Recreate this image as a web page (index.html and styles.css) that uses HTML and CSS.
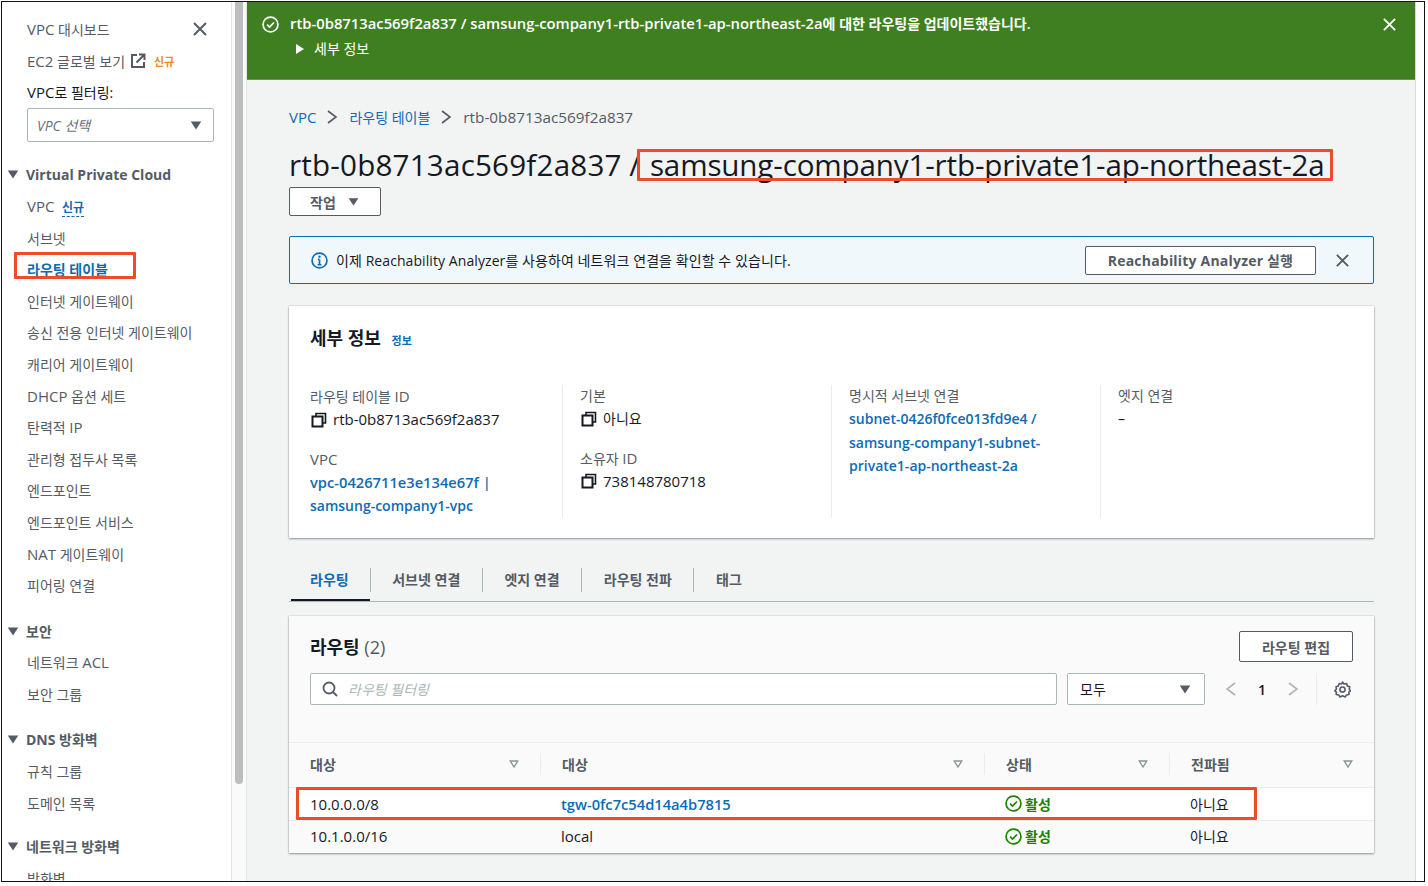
FILE: index.html
```html
<!DOCTYPE html>
<html lang="ko">
<head>
    <meta charset="UTF-8">
    <title>rtb-0b8713ac569f2a837 | VPC</title>
    <link rel="stylesheet" href="styles.css">
</head>
<body>
    <svg class="icon-defs" width="0" height="0">
        <defs>
            <symbol id="i-x" viewBox="0 0 16 16"><path d="M2 2l12 12M14 2L2 14" fill="none" stroke="currentColor" stroke-width="2"/></symbol>
            <symbol id="i-caret" viewBox="0 0 16 16"><path d="M2 4h12l-6 9z" fill="currentColor"/></symbol>
            <symbol id="i-check" viewBox="0 0 16 16"><circle cx="8" cy="8" r="7" fill="none" stroke="currentColor" stroke-width="1.6"/><path d="M4.8 8.2l2.3 2.3 4.2-4.4" fill="none" stroke="currentColor" stroke-width="1.6"/></symbol>
            <symbol id="i-copy" viewBox="0 0 16 16"><path d="M5 4V1.500h9.500V11H12" fill="none" stroke="currentColor" stroke-width="1.6"/><rect x="1.500" y="4.500" width="10" height="10" fill="none" stroke="currentColor" stroke-width="2"/></symbol>
            <symbol id="i-sort" viewBox="0 0 16 16"><path d="M3 4h10l-5 8z" fill="none" stroke="currentColor" stroke-width="1.8"/></symbol>
        </defs>
    </svg>

    <div class="frame">
        <nav class="sidebar">
            <div class="side-top">
                <a class="side-link"><span class="en">VPC</span> 대시보드</a>
                <svg class="side-close"><use href="#i-x"/></svg>
            </div>
            <div class="side-top">
                <a class="side-link"><span class="en">EC2</span> 글로벌 보기</a>
                <svg class="ext-icon" viewBox="0 0 16 16"><path d="M7 2H2v12h12V9" fill="none" stroke="currentColor" stroke-width="2"/><path d="M6.500 9.500L14 2M9 1.500h5.500V7" fill="none" stroke="currentColor" stroke-width="2"/></svg>
                <span class="badge-new">신규</span>
            </div>
            <div class="filter-label"><span class="en">VPC</span>로 필터링:</div>
            <div class="side-select">
                <span>VPC 선택</span>
                <svg class="caret"><use href="#i-caret"/></svg>
            </div>

            <div class="side-section first">
                <svg class="caret"><use href="#i-caret"/></svg>Virtual Private Cloud
            </div>
            <ul class="side-list vpc-list">
                <li><span class="en">VPC</span> <span class="badge-blue">신규</span></li>
                <li>서브넷</li>
                <li class="active">라우팅 테이블</li>
                <li>인터넷 게이트웨이</li>
                <li>송신 전용 인터넷 게이트웨이</li>
                <li>캐리어 게이트웨이</li>
                <li><span class="en">DHCP</span> 옵션 세트</li>
                <li>탄력적 <span class="en">IP</span></li>
                <li>관리형 접두사 목록</li>
                <li>엔드포인트</li>
                <li>엔드포인트 서비스</li>
                <li><span class="en">NAT</span> 게이트웨이</li>
                <li>피어링 연결</li>
            </ul>

            <div class="side-section">
                <svg class="caret"><use href="#i-caret"/></svg>보안
            </div>
            <ul class="side-list">
                <li>네트워크 <span class="en">ACL</span></li>
                <li>보안 그룹</li>
            </ul>

            <div class="side-section">
                <svg class="caret"><use href="#i-caret"/></svg>DNS 방화벽
            </div>
            <ul class="side-list">
                <li>규칙 그룹</li>
                <li>도메인 목록</li>
            </ul>

            <div class="side-section last">
                <svg class="caret"><use href="#i-caret"/></svg>네트워크 방화벽
            </div>
            <ul class="side-list">
                <li>방화벽</li>
            </ul>
        </nav>
        <div class="side-scroll"><div class="side-thumb"></div></div>

        <main class="main">
            <div class="flash">
                <svg class="flash-check"><use href="#i-check"/></svg>
                <div class="flash-body">
                    <div class="flash-title"><span class="flash-en">rtb-0b8713ac569f2a837 / samsung-company1-rtb-private1-ap-northeast-2a</span>에 대한 라우팅을 업데이트했습니다.</div>
                    <div class="flash-more"><span class="tri-right"></span>세부 정보</div>
                </div>
                <svg class="flash-close"><use href="#i-x"/></svg>
            </div>

            <div class="content">
                <div class="breadcrumb">
                    <a><span class="en">VPC</span></a>
                    <svg class="crumb-sep" viewBox="0 0 12 16"><path d="M2 2l8 6-8 6" fill="none" stroke="currentColor" stroke-width="1.600"/></svg>
                    <a>라우팅 테이블</a>
                    <svg class="crumb-sep" viewBox="0 0 12 16"><path d="M2 2l8 6-8 6" fill="none" stroke="currentColor" stroke-width="1.600"/></svg>
                    <span class="crumb-id">rtb-0b8713ac569f2a837</span>
                </div>

                <h1 class="page-title"><span class="title-id">rtb-0b8713ac569f2a837</span> / <span class="title-name">samsung-company1-rtb-private1-ap-northeast-2a</span></h1>
                <button class="btn btn-actions">작업 <svg class="caret"><use href="#i-caret"/></svg></button>

                <div class="info-alert">
                    <svg class="info-icon" viewBox="0 0 16 16"><circle cx="8" cy="8" r="7" fill="none" stroke="currentColor" stroke-width="1.600"/><path d="M8 7v5M6.200 12h3.600M6.500 7H8" fill="none" stroke="currentColor" stroke-width="1.600"/><circle cx="8" cy="4.400" r="1.100" fill="currentColor"/></svg>
                    <span class="info-text">이제 Reachability Analyzer를 사용하여 네트워크 연결을 확인할 수 있습니다.</span>
                    <button class="btn btn-run">Reachability Analyzer 실행</button>
                    <svg class="info-close"><use href="#i-x"/></svg>
                </div>

                <section class="card details">
                    <h2 class="card-title">세부 정보 <a class="info-link">정보</a></h2>
                    <div class="detail-grid">
                        <div class="detail-col">
                            <div class="field">
                                <div class="field-label">라우팅 테이블 <span class="en">ID</span></div>
                                <div class="field-value"><svg class="copy"><use href="#i-copy"/></svg><span class="en">rtb-0b8713ac569f2a837</span></div>
                            </div>
                            <div class="field">
                                <div class="field-label"><span class="en">VPC</span></div>
                                <div class="field-value link-value"><a><span class="link-id">vpc-0426711e3e134e67f |</span><br>samsung-company1-vpc</a></div>
                            </div>
                        </div>
                        <div class="detail-col">
                            <div class="field">
                                <div class="field-label">기본</div>
                                <div class="field-value"><svg class="copy"><use href="#i-copy"/></svg>아니요</div>
                            </div>
                            <div class="field">
                                <div class="field-label">소유자 <span class="en">ID</span></div>
                                <div class="field-value"><svg class="copy"><use href="#i-copy"/></svg><span class="en">738148780718</span></div>
                            </div>
                        </div>
                        <div class="detail-col">
                            <div class="field">
                                <div class="field-label">명시적 서브넷 연결</div>
                                <div class="field-value link-value"><a>subnet-0426f0fce013fd9e4 /<br>samsung-company1-subnet-<br>private1-ap-northeast-2a</a></div>
                            </div>
                        </div>
                        <div class="detail-col">
                            <div class="field">
                                <div class="field-label">엣지 연결</div>
                                <div class="field-value">–</div>
                            </div>
                        </div>
                    </div>
                </section>

                <div class="tabs">
                    <a class="tab active">라우팅</a>
                    <a class="tab">서브넷 연결</a>
                    <a class="tab">엣지 연결</a>
                    <a class="tab">라우팅 전파</a>
                    <a class="tab">태그</a>
                </div>

                <section class="card routes">
                    <div class="routes-head">
                        <h2 class="card-title">라우팅 <span class="count">(2)</span></h2>
                        <button class="btn btn-edit">라우팅 편집</button>
                    </div>
                    <div class="routes-tools">
                        <div class="search">
                            <svg class="search-icon" viewBox="0 0 16 16"><circle cx="7" cy="7" r="5.500" fill="none" stroke="currentColor" stroke-width="1.800"/><path d="M11 11l4 4" stroke="currentColor" stroke-width="1.800"/></svg>
                            <span>라우팅 필터링</span>
                        </div>
                        <div class="scope">모두 <svg class="caret"><use href="#i-caret"/></svg></div>
                        <div class="pager">
                            <svg class="pager-arrow" viewBox="0 0 12 16"><path d="M10 2L2 8l8 6" fill="none" stroke="currentColor" stroke-width="1.600"/></svg>
                            <span class="pager-num">1</span>
                            <svg class="pager-arrow" viewBox="0 0 12 16"><path d="M2 2l8 6-8 6" fill="none" stroke="currentColor" stroke-width="1.600"/></svg>
                        </div>
                        <div class="settings">
                            <svg class="gear" viewBox="0 0 16 16"><path d="M8 1l1.500 1.800 2.300-.4.800 2.200 2.200.8-.4 2.300L15.500 9.200l-1.500 1.200.1 2.300-2.300.4-1.300 1.900L8 13.900 5.700 15l-1.300-1.900-2.300-.4.100-2.300L.8 9.200 2.300 7.700l-.4-2.300 2.200-.8.800-2.200 2.300.4z" fill="none" stroke="currentColor" stroke-width="1.500" stroke-linejoin="round"/><circle cx="8" cy="8" r="2.400" fill="none" stroke="currentColor" stroke-width="1.500"/></svg>
                        </div>
                    </div>
                    <div class="table">
                        <div class="t-row t-head">
                            <div class="t-cell">대상<svg class="sort"><use href="#i-sort"/></svg></div>
                            <div class="t-cell">대상<svg class="sort"><use href="#i-sort"/></svg></div>
                            <div class="t-cell">상태<svg class="sort"><use href="#i-sort"/></svg></div>
                            <div class="t-cell">전파됨<svg class="sort"><use href="#i-sort"/></svg></div>
                        </div>
                        <div class="t-row t-white">
                            <div class="t-cell"><span class="en">10.0.0.0/8</span></div>
                            <div class="t-cell"><a class="link-id">tgw-0fc7c54d14a4b7815</a></div>
                            <div class="t-cell status"><svg class="status-icon"><use href="#i-check"/></svg>활성</div>
                            <div class="t-cell">아니요</div>
                        </div>
                        <div class="t-row">
                            <div class="t-cell"><span class="en">10.1.0.0/16</span></div>
                            <div class="t-cell"><span class="en">local</span></div>
                            <div class="t-cell status"><svg class="status-icon"><use href="#i-check"/></svg>활성</div>
                            <div class="t-cell">아니요</div>
                        </div>
                    </div>
                </section>
            </div>
        </main>
        <div class="page-scroll"></div>

        <!-- red annotation boxes from the screenshot author -->
        <div class="mark mark-nav"></div>
        <div class="mark mark-title"></div>
        <div class="mark mark-row"></div>
    </div>
</body>
</html>
```

FILE: styles.css
```css
* {
    margin: 0;
    padding: 0;
    box-sizing: border-box;
}

body {
    font-family: "Open Sans", "Noto Sans CJK KR", sans-serif;
    font-size: 14px;
    color: #16191f;
    background: white;
}

a {
    color: #0f6ab4;
}

ul {
    list-style: none;
}

/* latin runs are a bit wider than the korean text around them */
.en {
    font-size: 15px;
}

.link-id {
    font-size: 14.7px;
}

.icon-defs {
    position: absolute;
}

.frame {
    position: relative;
    display: flex;
    width: 1424px;
    height: 881px;
    margin: 1px 0 0 1px;
    border: 1px solid #111;
    overflow: hidden;
}

.caret {
    width: 14px;
    height: 14px;
    color: #545b64;
}

/* sidebar */
.sidebar {
    flex: none;
    width: 230px;
    height: 880px;
    overflow: hidden;
    padding: 11px 0 0 25px;
    background: white;
    border-right: 1px solid #e3e5e5;
    color: #545b64;
}

.side-top {
    display: flex;
    align-items: center;
    height: 32px;
}

.side-link {
    color: inherit;
}

.side-close {
    width: 16px;
    height: 16px;
    margin-left: auto;
    margin-right: 23px;
}

.ext-icon {
    width: 16px;
    height: 16px;
    margin-left: 5px;
}

.badge-new {
    margin-left: 8px;
    font-size: 11px;
    font-weight: 700;
    color: #f08a1d;
}

.filter-label {
    margin-top: 5px;
    line-height: 20px;
    color: #16191f;
}

.side-select {
    display: flex;
    align-items: center;
    justify-content: space-between;
    width: 187px;
    height: 34px;
    margin-top: 5px;
    padding: 0 10px 0 9px;
    background: white;
    border: 1px solid #aab7b8;
    border-radius: 2px;
    font-style: italic;
    color: #687078;
}

.side-section {
    display: flex;
    align-items: center;
    gap: 6px;
    height: 20px;
    margin: 19px 0 0 -21px;
    font-weight: 700;
    color: #545b64;
}

.side-section.first {
    margin-top: 22px;
}

.side-section.last {
    margin-top: 17px;
}

.side-list {
    padding-top: 6.5px;
}

.vpc-list {
    padding-top: 7px;
    margin-bottom: 2px;
}

.side-list li {
    height: 31.6px;
    line-height: 31.6px;
}

.side-list .active {
    font-weight: 700;
    color: #0f6ab4;
}

.badge-blue {
    margin-left: 4px;
    font-size: 12px;
    font-weight: 600;
    color: #0f6ab4;
    border-bottom: 1px dashed #0f6ab4;
}

.side-scroll {
    flex: none;
    width: 15px;
    padding: 0 3px;
    background: #fafafa;
    border-right: 1px solid #e3e5e5;
}

.side-thumb {
    width: 8px;
    height: 782px;
    background: #bdbdbd;
    border-radius: 0 0 4px 4px;
}

/* main column */
.main {
    flex: none;
    width: 1168px;
    background: #f2f3f3;
}

.page-scroll {
    flex: 1;
    background: white;
    border-left: 1px solid #d5dbdb;
}

.flash {
    display: flex;
    height: 78px;
    padding: 11px 18px 0 15px;
    background: #3f7f22;
    border-bottom: 1px solid #6d8f5c;
    color: white;
}

.flash-check {
    flex: none;
    width: 17px;
    height: 17px;
    margin-top: 3px;
}

.flash-body {
    flex: 1;
    margin-left: 11px;
}

.flash-title {
    line-height: 20px;
    font-weight: 600;
}

.flash-en {
    font-size: 14.8px;
}

.flash-more {
    display: flex;
    align-items: center;
    margin-top: 5px;
    line-height: 20px;
}

.tri-right {
    width: 0;
    height: 0;
    margin: 0 10px 0 6px;
    border-left: 8px solid white;
    border-top: 5px solid transparent;
    border-bottom: 5px solid transparent;
}

.flash-close {
    flex: none;
    width: 15px;
    height: 15px;
    margin-top: 4px;
}

.content {
    padding: 0 41px 0 42px;
}

.breadcrumb {
    display: flex;
    align-items: center;
    height: 20px;
    margin-top: 27px;
    color: #545b64;
}

.crumb-sep {
    width: 12px;
    height: 16px;
    margin: 0 11px 0 10px;
}

.crumb-id {
    font-size: 15.3px;
}

.page-title {
    margin-top: 19px;
    font-size: 29.6px;
    font-weight: 400;
    line-height: 38px;
    white-space: nowrap;
}

.title-id {
    letter-spacing: 0.2px;
}

.title-name {
    margin-left: 2px;
    letter-spacing: -0.15px;
}

.btn {
    background: white;
    border: 1px solid #545b64;
    border-radius: 2px;
    font: inherit;
    font-weight: 600;
    color: #545b64;
}

.btn-actions {
    display: flex;
    align-items: center;
    justify-content: center;
    gap: 11px;
    width: 92px;
    height: 29px;
    margin-top: 3px;
}

.btn-actions .caret {
    width: 13px;
    height: 13px;
}

.info-alert {
    display: flex;
    align-items: center;
    height: 48px;
    margin-top: 20px;
    padding: 0 23px 0 21px;
    background: #f1f8fb;
    border: 1px solid #0f6ab4;
    border-radius: 2px;
}

.info-icon {
    width: 17px;
    height: 17px;
    color: #0f6ab4;
}

.info-text {
    margin-left: 8px;
    letter-spacing: 0.08px;
}

.btn-run {
    width: 231px;
    height: 29px;
    margin-left: auto;
    font-weight: 700;
    letter-spacing: 0.2px;
}

.info-close {
    width: 15px;
    height: 15px;
    margin-left: 19px;
    color: #545b64;
}

/* cards */
.card {
    background: white;
    box-shadow: 0 1px 2px 0 rgba(0, 28, 36, 0.4), 0 0 1px 0 rgba(0, 28, 36, 0.3);
}

.details {
    height: 232px;
    margin-top: 22px;
    padding: 20px 0 0 21px;
}

.card-title {
    font-size: 18px;
    font-weight: 700;
    line-height: 24px;
}

.info-link {
    margin-left: 6px;
    font-size: 11px;
    font-weight: 600;
}

.detail-grid {
    display: grid;
    grid-template-columns: 253px repeat(3, 269px);
    margin-top: 32px;
}

.detail-col {
    height: 133px;
    padding-left: 17px;
    border-right: 1px solid #eaeded;
}

.detail-col:first-child {
    padding-left: 0;
}

.detail-col:last-child {
    border-right: none;
}

.field {
    margin-bottom: 16px;
}

.field-label {
    line-height: 22px;
    color: #545b64;
}

.field-value {
    display: flex;
    align-items: center;
    line-height: 23.5px;
}

.link-value {
    display: block;
    font-weight: 600;
}

.copy {
    flex: none;
    width: 16px;
    height: 16px;
    margin: 0 6px 0 1px;
}

/* tabs */
.tabs {
    display: flex;
    align-items: center;
    height: 37px;
    margin-top: 27px;
    padding-bottom: 6px;
    border-bottom: 1px solid #aab7b8;
}

.tab {
    position: relative;
    height: 24px;
    padding: 0 21.6px;
    line-height: 24px;
    font-weight: 600;
    color: #545b64;
    border-left: 1px solid #aab7b8;
}

.tab:first-child {
    padding: 0 21px;
    border-left: none;
}

.tab.active {
    color: #0f6ab4;
}

.tab.active::after {
    content: "";
    position: absolute;
    left: 2px;
    right: 0;
    bottom: -9px;
    height: 2px;
    background: #16191f;
}

.routes {
    height: 237px;
    margin-top: 14px;
    padding-top: 15px;
    background: #fafafa;
}

.routes-head {
    display: flex;
    align-items: center;
    justify-content: space-between;
    height: 31px;
    margin: 0 21px;
}

.count {
    font-weight: 400;
    color: #545b64;
}

.btn-edit {
    width: 114px;
    height: 31px;
}

.routes-tools {
    display: flex;
    align-items: center;
    height: 32px;
    margin: 11px 21px 0 21px;
}

.search {
    display: flex;
    align-items: center;
    flex: none;
    width: 747px;
    height: 32px;
    padding-left: 11px;
    background: white;
    border: 1px solid #aab7b8;
    border-radius: 2px;
    font-style: italic;
    color: #aab7b8;
}

.search-icon {
    width: 16px;
    height: 16px;
    margin-right: 10px;
    color: #545b64;
}

.scope {
    display: flex;
    align-items: center;
    justify-content: space-between;
    flex: none;
    width: 138px;
    height: 32px;
    margin-left: 10px;
    padding: 0 12px;
    background: white;
    border: 1px solid #aab7b8;
    border-radius: 2px;
}

.pager {
    display: flex;
    align-items: center;
    margin-left: 20px;
}

.pager-arrow {
    width: 12px;
    height: 16px;
    color: #aab7b8;
}

.pager-num {
    margin: 0 21px;
    font-weight: 600;
}

.settings {
    display: flex;
    align-items: center;
    height: 32px;
    margin-left: 17px;
    padding-left: 17px;
    border-left: 1px solid #eaeded;
}

.gear {
    width: 17px;
    height: 17px;
    color: #545b64;
}

.table {
    margin-top: 37px;
    border-top: 1px solid #eaeded;
}

.t-row {
    display: grid;
    grid-template-columns: 251px 444px 185px 1fr;
    align-items: center;
    height: 32.5px;
    border-top: 1px solid #eaeded;
}

.t-white {
    background: white;
}

.t-head {
    height: 44px;
    border-top: none;
    font-weight: 700;
    color: #545b64;
}

.t-cell {
    padding-left: 21px;
    white-space: nowrap;
}

.t-head .t-cell {
    position: relative;
    display: flex;
    align-items: center;
    justify-content: space-between;
    height: 22px;
    margin-bottom: 2px;
    padding-right: 20px;
    border-left: 1px solid #eaeded;
}

.t-head .t-cell:first-child {
    border-left: none;
}

.sort {
    width: 12px;
    height: 12px;
    color: #879596;
}

.t-cell a {
    font-weight: 600;
}

.status {
    display: flex;
    align-items: center;
    font-weight: 600;
    color: #1d8102;
}

.status-icon {
    width: 17px;
    height: 17px;
    margin-right: 3px;
}

/* annotation boxes, they lie over the page */
.mark {
    position: absolute;
    border: 3px solid #ee4b2b;
    border-radius: 1px;
}

.mark-nav {
    left: 12px;
    top: 250px;
    width: 122px;
    height: 27px;
}

.mark-title {
    left: 635px;
    top: 147px;
    width: 696px;
    height: 32px;
}

.mark-row {
    left: 294px;
    top: 785px;
    width: 961px;
    height: 33px;
}
```
